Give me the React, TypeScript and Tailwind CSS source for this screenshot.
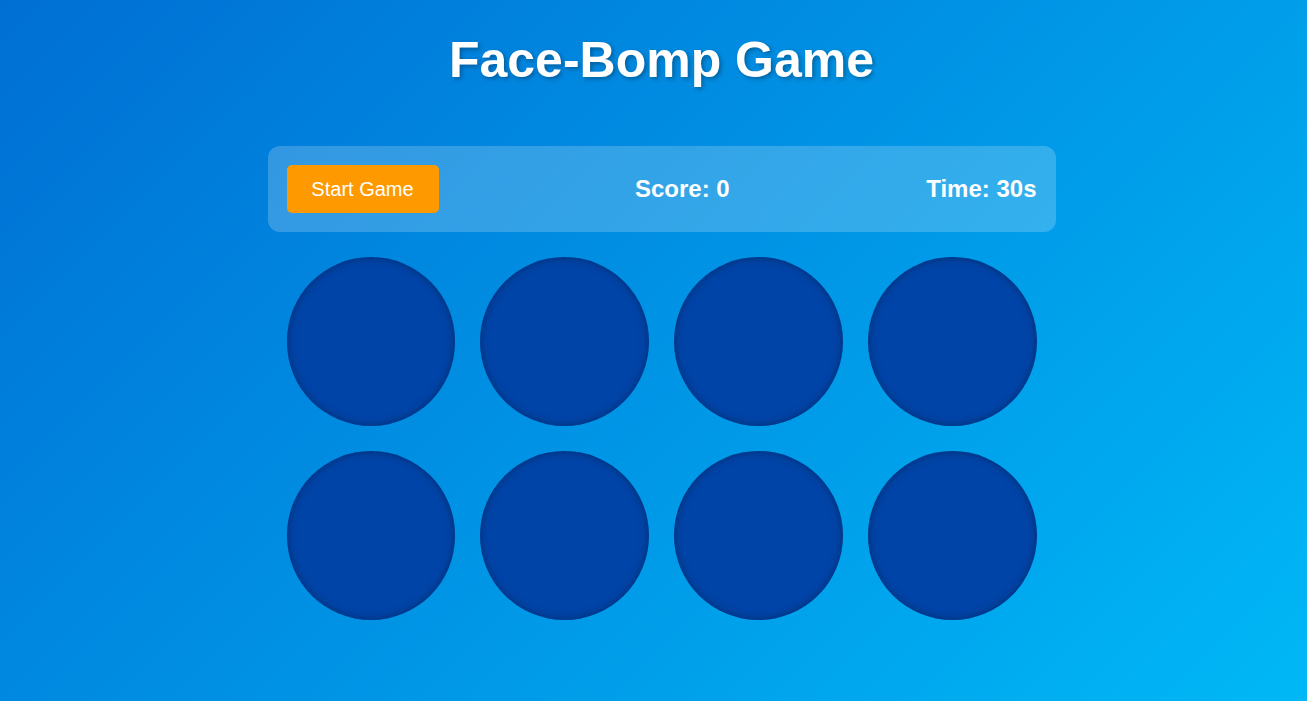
export default function App() {
  const holes = Array.from({ length: 8 }, (_, i) => i);

  return (
    <div
      className="min-h-screen w-full bg-[linear-gradient(135deg,#006fd4_0%,#00b8f6_100%)] pt-[36px] pl-[16px]"
      style={{ fontFamily: '"Liberation Sans", Arial, sans-serif' }}
    >
      <h1 className="text-center text-[50px] leading-[48px] font-bold text-white [text-shadow:2px_2px_4px_rgba(0,0,0,0.3)]">
        Face-Bomp Game
      </h1>

      <div className="mx-auto mt-[62px] w-[788px]">
        {/* Controls */}
        <div className="flex items-center justify-between rounded-xl bg-white/20 p-[19px]">
          <button className="h-[48px] w-[152px] rounded-[5px] bg-[#ff9900] text-[20px] text-white">
            Start Game
          </button>
          <div className="text-[24px] font-bold text-white">Score: 0</div>
          <div className="text-[24px] font-bold text-white">Time: 30s</div>
        </div>

        {/* Holes */}
        <div className="mt-[25px] grid grid-cols-4 gap-[25px] px-[19px]">
          {holes.map(h => (
            <div
              key={h}
              className="aspect-square rounded-full bg-[#0044a8] shadow-[inset_0_0_10px_rgba(0,0,0,0.35)]"
            />
          ))}
        </div>
      </div>
    </div>
  );
}
